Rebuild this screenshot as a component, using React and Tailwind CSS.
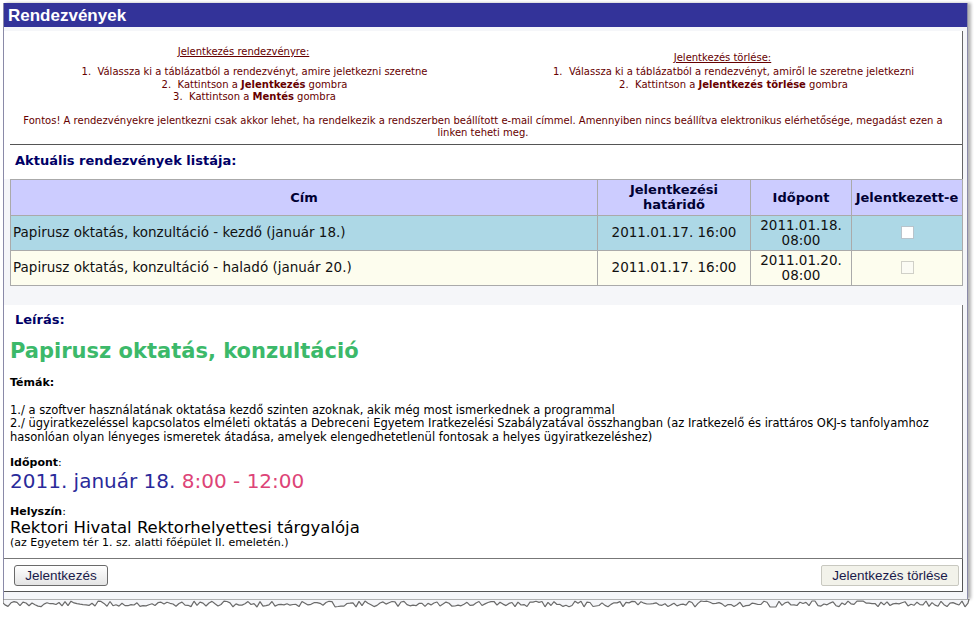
import React from "react";

const tahoma = { fontFamily: '"DejaVu Sans", Verdana, sans-serif' };

// jagged "torn paper" edge under the frame
const tearPath = (() => {
  let s = 11;
  const rnd = () => {
    s = (s * 9301 + 49297) % 233280;
    return s / 233280;
  };
  let d = "M0 0 L0 4";
  for (let x = 2; x <= 966; x += 3) d += ` L${x} ${(2 + rnd() * 6).toFixed(1)}`;
  return d + " L966 0 Z";
})();

const events = [
  {
    title: "Papirusz oktatás, konzultáció - kezdő (január 18.)",
    deadline: "2011.01.17. 16:00",
    date: "2011.01.18.",
    time: "08:00",
    row: "bg-[#add8e6]",
    box: "border-[#b8c4cc] bg-white",
  },
  {
    title: "Papirusz oktatás, konzultáció - haladó (január 20.)",
    deadline: "2011.01.17. 16:00",
    date: "2011.01.20.",
    time: "08:00",
    row: "bg-[#fdfdee]",
    box: "border-[#d0d0c8] bg-[#fbfbf4]",
  },
];

export default function App() {
  return (
    <div className="min-h-[626px] w-[974px] bg-white pl-[3px] pt-[3px]" style={tahoma}>
      <div className="w-[965px] border-l border-r border-[#8a8aa8] bg-[#f5f6f9] shadow-[3px_0_3px_rgba(0,0,0,0.3)]">
        {/* title bar */}
        <div
          className="h-[24px] bg-[#333399] pl-[4px] text-[17px] font-bold leading-[25px] text-white"
          style={{ fontFamily: '"Liberation Sans", Arial, sans-serif' }}
        >
          Rendezvények
        </div>

        <div className="pb-[7px] pr-[4px] pt-[4px]">
          {/* instructions */}
          <div className="border-r border-[#666] bg-white text-[10px] text-[#660000]">
            <div className="ml-[6px] border-b border-[#555] pb-[5px]">
              <div className="-ml-[6px] grid grid-cols-2 text-center">
                <div className="pt-[15px]">
                  <div className="leading-[12px] underline">Jelentkezés rendezvényre:</div>
                  <ol className="mt-[8px] list-inside list-decimal pl-[22px] leading-[12.5px]">
                    <li>&nbsp;Válassza ki a táblázatból a rendezvényt, amire jeletkezni szeretne</li>
                    <li>&nbsp;Kattintson a <b>Jelentkezés</b> gombra</li>
                    <li>&nbsp;Kattintson a <b>Mentés</b> gombra</li>
                  </ol>
                </div>
                <div className="pt-[21px]">
                  <div className="leading-[12px] underline">Jelentkezés törlése:</div>
                  <ol className="mt-[2px] list-inside list-decimal pl-[22px] leading-[12.5px]">
                    <li>&nbsp;Válassza ki a táblázatból a rendezvényt, amiről le szeretne jeletkezni</li>
                    <li>&nbsp;Kattintson a <b>Jelentkezés törlése</b> gombra</li>
                  </ol>
                </div>
              </div>
              <p className="-ml-[6px] mt-[11px] whitespace-nowrap text-center leading-[12px]">
                Fontos! A rendezvényekre jelentkezni csak akkor lehet, ha rendelkezik a rendszerben beállított
                e-mail címmel. Amennyiben nincs beállítva elektronikus elérhetősége, megadást ezen a
                <br />
                linken teheti meg.
              </p>
            </div>
            <div className="pb-[10px] pl-[11px] pt-[8px] text-[13px] font-bold leading-[16px] text-[#000066]">
              Aktuális rendezvények listája:
            </div>
          </div>

          {/* events table */}
          <div className="ml-[6px] w-[953px]">
            <table className="w-full border-collapse border border-[#666] text-[13.5px] text-[#111]">
              <thead>
                <tr className="h-[36px] bg-[#ccccff] text-center text-[13px] font-bold leading-[15px] text-[#000033]">
                  <th className="w-[587px] border border-[#aaa] font-bold">Cím</th>
                  <th className="w-[153px] border border-[#aaa] font-bold">
                    Jelentkezési
                    <br />
                    határidő
                  </th>
                  <th className="w-[101px] border border-[#aaa] font-bold">Időpont</th>
                  <th className="whitespace-nowrap border border-[#aaa] font-bold">Jelentkezett-e</th>
                </tr>
              </thead>
              <tbody>
                {events.map((e) => (
                  <tr key={e.date} className={`h-[35px] leading-[15px] ${e.row}`}>
                    <td className="border border-[#aaa] pl-[2px]">{e.title}</td>
                    <td className="border border-[#aaa] text-center">{e.deadline}</td>
                    <td className="border border-[#aaa] text-center">
                      {e.date}
                      <br />
                      {e.time}
                    </td>
                    <td className="border border-[#aaa]">
                      <div className={`mx-auto h-[13px] w-[13px] border ${e.box}`} />
                    </td>
                  </tr>
                ))}
              </tbody>
            </table>
          </div>

          {/* description */}
          <div className="mt-[19px] border-b border-r border-[#777] bg-white pb-[8px] pl-[6px] pt-[7px] text-[11.5px] text-black">
            <div className="pl-[5px] text-[13px] font-bold leading-[16px] text-[#000066]">Leírás:</div>
            <h1 className="mt-[11px] text-[21px] font-bold leading-[25px] text-[#3cb96a]">
              Papirusz oktatás, konzultáció
            </h1>
            <div className="mt-[12px] text-[11px] font-bold leading-[14px]">Témák:</div>
            <p className="mt-[14px] leading-[13.5px]">
              1./ a szoftver használatának oktatása kezdő szinten azoknak, akik még most ismerkednek a programmal
              <br />
              2./ ügyiratkezeléssel kapcsolatos elméleti oktatás a Debreceni Egyetem Iratkezelési Szabályzatával
              összhangban (az Iratkezelő és irattáros OKJ-s tanfolyamhoz
              <br />
              hasonlóan olyan lényeges ismeretek átadása, amelyek elengedhetetlenül fontosak a helyes ügyiratkezeléshez)
            </p>
            <div className="mt-[12px] text-[11px] leading-[14px]">
              <b>Időpont</b>:
            </div>
            <div className="text-[20px] leading-[22px]">
              <span className="text-[#2a2a9a]">2011. január 18.</span>{" "}
              <span className="text-[#dd4477]">8:00 - 12:00</span>
            </div>
            <div className="mt-[13px] text-[11px] leading-[14px]">
              <b>Helyszín</b>:
            </div>
            <div className="text-[16.5px] leading-[17px]">Rektori Hivatal Rektorhelyettesi tárgyalója</div>
            <div className="text-[11px] leading-[14px]">(az Egyetem tér 1. sz. alatti főépület II. emeletén.)</div>
          </div>

          {/* buttons */}
          <div
            className="flex items-center justify-between border-b border-r border-[#555] bg-white pb-[5px] pl-[10px] pr-[3px] pt-[6px] text-[13.5px]"
            style={{ fontFamily: '"Liberation Sans", Arial, sans-serif' }}
          >
            <button className="h-[21px] w-[94px] rounded-[3px] border border-[#6a6a6a] bg-gradient-to-b from-white to-[#e4e4e4] leading-[19px] text-[#1a1a4a]">
              Jelentkezés
            </button>
            <button className="h-[21px] w-[138px] rounded-[2px] border border-[#c8c8c0] bg-[#f2f2ea] leading-[19px] text-[#1a1a4a]">
              Jelentkezés törlése
            </button>
          </div>
        </div>
      </div>
      <svg width="968" height="12" className="block" viewBox="0 0 968 12">
        <path d={tearPath} fill="#f5f6f9" stroke="#6a6a6a" strokeWidth="1.2" strokeLinejoin="bevel" />
      </svg>
    </div>
  );
}
